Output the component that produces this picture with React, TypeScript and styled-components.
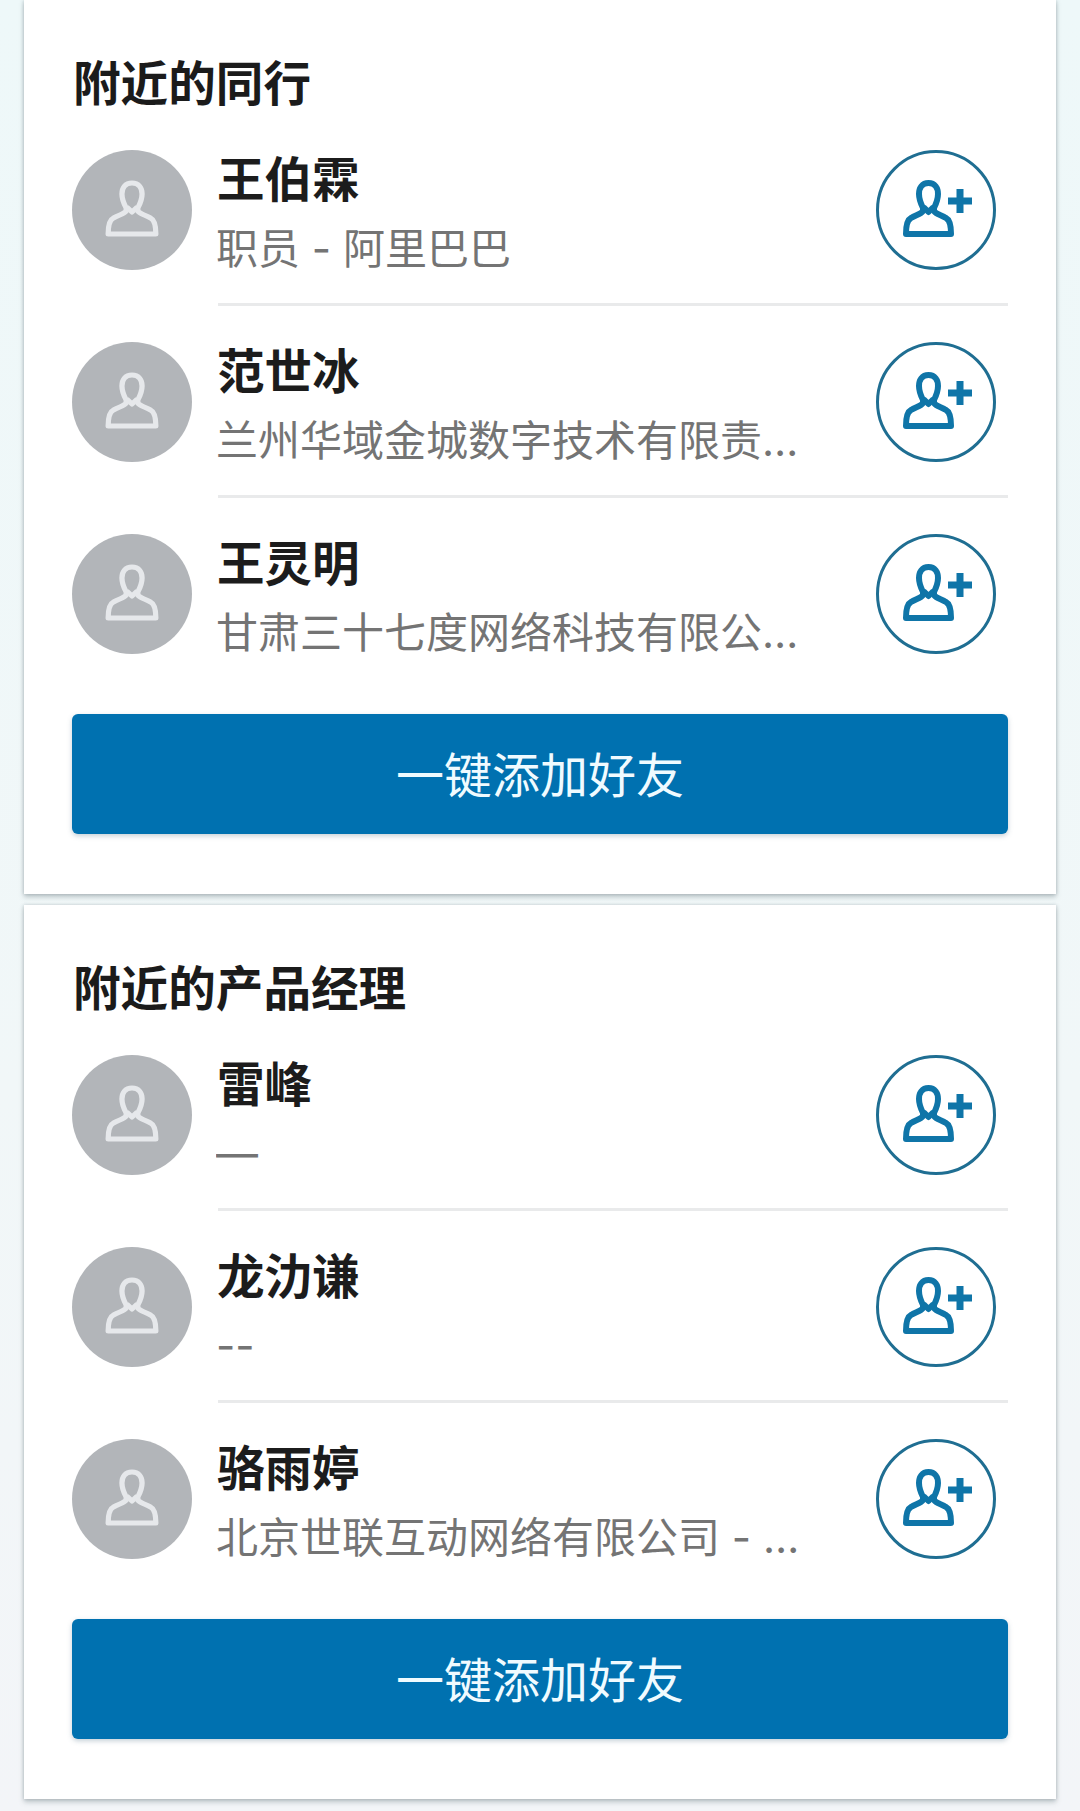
import React from "react";
import styled, { createGlobalStyle } from "styled-components";

const Global = createGlobalStyle`
  html, body { margin: 0; padding: 0; background: #f0f7f8; }
  body { font-family: "Noto Sans CJK SC", "Noto Sans", sans-serif; }
  * { box-sizing: border-box; }
`;

const Page = styled.div`
  width: 1080px;
  height: 1811px;
  overflow: hidden;
  padding: 0 24px;
  display: flex;
  flex-direction: column;
  gap: 11px;
  background: linear-gradient(180deg, #eef8f9 0%, #f1f7f8 60%, #f3f5f8 100%);
`;

const Card = styled.section`
  height: 894px;
  padding: 0 48px 60px;
  background: #fff;
  box-shadow: 0 3px 5px rgba(120, 135, 140, 0.45), -1px 0 3px rgba(150, 165, 170, 0.25), 1px 0 3px rgba(150, 165, 170, 0.25);
`;

const Title = styled.h2`
  margin: 0 0 8px;
  padding: 54px 0 0 1px;
  height: 108px;
  font-size: 47.6px;
  line-height: 54px;
  font-weight: 700;
  color: #1b1b1b;
`;

const Row = styled.div`
  display: flex;
  align-items: flex-start;
  gap: 26px;
  height: 192px;
`;

const Avatar = styled.div`
  flex: none;
  width: 120px;
  height: 120px;
  margin-top: 34px;
  border-radius: 50%;
  background: #b2b5b9;
  display: flex;
  align-items: center;
  justify-content: center;
`;

const RowBody = styled.div<{ $last?: boolean }>`
  flex: 1;
  min-width: 0;
  height: 190px;
  padding: 31px 12px 0 0;
  display: flex;
  align-items: flex-start;
  justify-content: space-between;
  border-bottom: 3px solid ${(p) => (p.$last ? "transparent" : "#e9eaeb")};
`;

const Info = styled.div`
  width: 588px;
  min-width: 0;
`;

const Name = styled.div`
  margin-left: -1px;
  font-size: 47.5px;
  line-height: 60px;
  font-weight: 700;
  color: #1c1c1c;
`;

const Sub = styled.div`
  margin-top: 12px;
  margin-left: -2px;
  font-family: Inter, "Noto Sans CJK SC", sans-serif;
  font-size: 42px;
  line-height: 60px;
  color: #747474;
  white-space: nowrap;
  overflow: hidden;
  text-overflow: ellipsis;
`;

const AddButton = styled.button`
  flex: none;
  width: 120px;
  height: 120px;
  margin-top: 3px;
  padding: 0;
  border: 3px solid #1f6e92;
  border-radius: 50%;
  background: #fff;
  display: flex;
  align-items: center;
  justify-content: center;
`;

const Primary = styled.button`
  display: block;
  width: 100%;
  height: 120px;
  margin-top: 22px;
  padding: 0 0 5px;
  border: none;
  border-radius: 6px;
  background: #0071b0;
  box-shadow: 0 2px 5px rgba(90, 120, 140, 0.35);
  color: #f0fbff;
  font-family: inherit;
  font-size: 48px;
`;

const PERSON =
  "M25.5 3 C32 3 35 8 35 14 C35 20 32.5 25 31 28 L31 31 C33 34 38 35 43 38 C47 40 48 46 48 54 L3 54 C3 46 4 40 8 38 C13 35 18 34 20 31 L20 28 C18.5 25 16 20 16 14 C16 8 19 3 25.5 3 Z";
const NECK = "M20.5 27 L25.5 32 L30.5 27";

const PersonIcon = () => (
  <svg
    width="54"
    height="60"
    viewBox="0 0 51 60"
    preserveAspectRatio="none"
    fill="none"
    stroke="#e6e8eb"
    strokeWidth="5"
    strokeLinejoin="round"
  >
    <path d={PERSON} />
    <path d={NECK} />
  </svg>
);

const AddIcon = () => (
  <svg width="72" height="60" viewBox="-3 0 72 60" fill="none" stroke="#0f75a8">
    <path d={PERSON} strokeWidth="6" strokeLinejoin="round" />
    <path d={NECK} strokeWidth="6" strokeLinejoin="round" />
    <path d="M45 21 H69 M57 9 V33" strokeWidth="7" />
  </svg>
);

type Person = { name: string; sub: string };

const groups: { title: string; people: Person[] }[] = [
  {
    title: "附近的同行",
    people: [
      { name: "王伯霖", sub: "职员 - 阿里巴巴" },
      { name: "范世冰", sub: "兰州华域金城数字技术有限责任公司" },
      { name: "王灵明", sub: "甘肃三十七度网络科技有限公司 - 职员" },
    ],
  },
  {
    title: "附近的产品经理",
    people: [
      { name: "雷峰", sub: "—" },
      { name: "龙氻谦", sub: "--" },
      { name: "骆雨婷", sub: "北京世联互动网络有限公司 - 产品经理" },
    ],
  },
];

export default function App() {
  return (
    <Page>
      <Global />
      {groups.map((g) => (
        <Card key={g.title}>
          <Title>{g.title}</Title>
          {g.people.map((p, i) => (
            <Row key={p.name}>
              <Avatar>
                <PersonIcon />
              </Avatar>
              <RowBody $last={i === g.people.length - 1}>
                <Info>
                  <Name>{p.name}</Name>
                  <Sub>{p.sub}</Sub>
                </Info>
                <AddButton aria-label="添加">
                  <AddIcon />
                </AddButton>
              </RowBody>
            </Row>
          ))}
          <Primary>一键添加好友</Primary>
        </Card>
      ))}
    </Page>
  );
}
